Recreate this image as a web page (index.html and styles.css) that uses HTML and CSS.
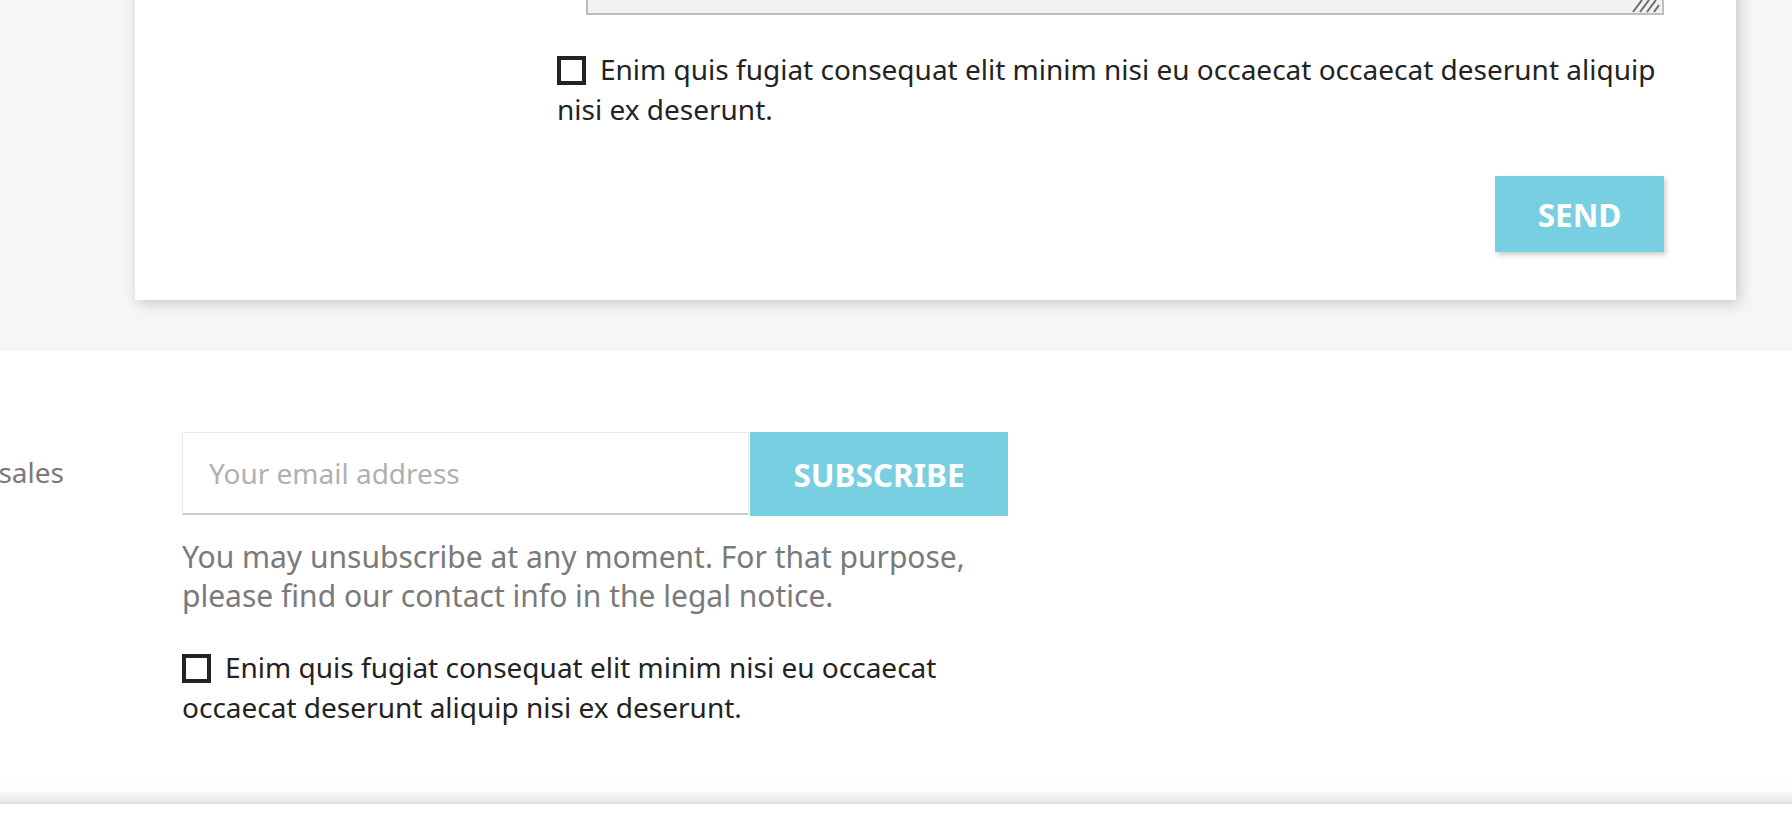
FILE: index.html
```html
<!DOCTYPE html>
<html lang="en">
<head>
<meta charset="utf-8">
<title>Contact</title>
<link rel="stylesheet" href="styles.css">
</head>
<body>
<section class="contact">
  <div class="card">
    <div class="fields">
      <div class="textarea">
        <svg class="grip" width="30" height="14" viewBox="0 0 30 14" aria-hidden="true">
          <path d="M2 13 L11 1 M9 13 L18 1 M16 13 L25 1 M23 13 L28 6" stroke="#6d6d6d" stroke-width="2" fill="none"/>
        </svg>
      </div>
      <label class="check"><span class="box"></span>Enim quis fugiat consequat elit minim nisi eu occaecat occaecat deserunt aliquip nisi ex deserunt.</label>
      <div class="actions"><button class="btn send" type="button">SEND</button></div>
    </div>
  </div>
</section>
<section class="newsletter">
  <div class="nl-row">
    <p class="nl-label">Get our latest news and special sales</p>
    <div class="nl-form">
      <div class="nl-inputs">
        <input class="email" type="text" placeholder="Your email address">
        <button class="btn subscribe" type="button">SUBSCRIBE</button>
      </div>
      <p class="nl-note">You may unsubscribe at any moment. For that purpose, please find our contact info in the legal notice.</p>
      <label class="check"><span class="box"></span>Enim quis fugiat consequat elit minim nisi eu occaecat occaecat deserunt aliquip nisi ex deserunt.</label>
    </div>
  </div>
  <div class="shade"></div>
</section>
<div class="footer"></div>
</body>
</html>
```
FILE: styles.css
```css
html, body {
  margin: 0;
  padding: 0;
}
body {
  font-family: "Noto Sans", "Open Sans", sans-serif;
  font-size: 28px;
  color: #232323;
  background: #fff;
  overflow: hidden;
}

.contact {
  background: #f6f6f6;
  display: flex;
  flex-direction: column;
  padding: 0 0 51px 135px;
}
.card {
  margin-top: -165px;
  width: 1601px;
  box-sizing: border-box;
  background: #fff;
  box-shadow: 3px 3px 14px rgba(0, 0, 0, 0.2);
  padding: 30px 72px 48px 422px;
}
.fields {
  display: flex;
  flex-direction: column;
}
.textarea {
  position: relative;
  margin-left: 29px;
  height: 150px;
  box-sizing: border-box;
  background: #f1f1f1;
  border: 2px solid #bdbdbd;
}
.grip {
  position: absolute;
  right: 1px;
  bottom: 0;
}

.check {
  display: block;
  line-height: 40px;
  color: #232323;
}
.fields .check {
  margin-top: 34px;
}
.box {
  display: inline-block;
  width: 29px;
  height: 29px;
  box-sizing: border-box;
  border: 4px solid #232323;
  vertical-align: -5px;
  margin-right: 14px;
}

.actions {
  display: flex;
  justify-content: flex-end;
  margin-top: 47px;
}
.btn {
  border: 0;
  padding: 0;
  background: #78cfe2;
  color: #fff;
  font-family: "Noto Sans", "Open Sans", sans-serif;
  font-weight: 700;
  font-size: 31.5px;
  cursor: pointer;
}
.send {
  width: 169px;
  height: 76px;
  box-shadow: 2px 3px 5px rgba(0, 0, 0, 0.2);
}

.newsletter {
  padding-top: 81px;
  background: #fff;
}
.nl-row {
  display: flex;
  gap: 118px;
}
.nl-label {
  width: 64px;
  margin: 20px 0 0;
  display: flex;
  justify-content: flex-end;
  white-space: nowrap;
  line-height: 40px;
  color: #7a7a7a;
}
.nl-form {
  width: 826px;
}
.nl-inputs {
  display: flex;
  align-items: flex-start;
  gap: 1px;
}
.email {
  width: 567px;
  height: 83px;
  box-sizing: border-box;
  border: 1px solid #e8e8e8;
  border-bottom: 2px solid #cdcdcd;
  padding: 0 26px;
  font-family: "Noto Sans", "Open Sans", sans-serif;
  font-size: 28px;
  color: #232323;
  background: #fff;
  outline: none;
}
.email::placeholder {
  color: #b0b0b0;
}
.subscribe {
  width: 258px;
  height: 84px;
}
.nl-note {
  margin: 21px 0 0;
  font-size: 30px;
  line-height: 39px;
  color: #7a7a7a;
}
.nl-form .check {
  margin-top: 32px;
}
.shade {
  margin-top: 53px;
  height: 23px;
  background: linear-gradient(to bottom, rgba(0, 0, 0, 0) 0%, rgba(0, 0, 0, 0.015) 50%, rgba(0, 0, 0, 0.1) 100%);
  border-bottom: 1px solid #dcdcdc;
}
.footer {
  height: 60px;
  background: #fff;
}
```
